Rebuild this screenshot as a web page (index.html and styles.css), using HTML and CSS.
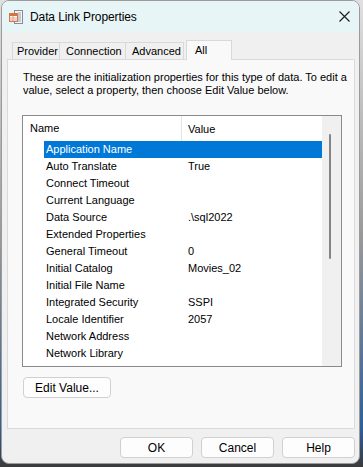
FILE: index.html
```html
<!DOCTYPE html>
<html>
<head>
<meta charset="utf-8">
<link rel="stylesheet" href="styles.css">
</head>
<body>
<div class="window">
  <div class="titlebar">
    <svg class="appicon" width="16" height="16" viewBox="0 0 16 16">
      <rect x="6.5" y="1.5" width="8" height="13" fill="#f4f4f4" stroke="#8a8a9a"/>
      <line x1="10" y1="4" x2="13" y2="4" stroke="#9aa0b8"/>
      <line x1="10" y1="6" x2="13" y2="6" stroke="#9aa0b8"/>
      <line x1="10" y1="8" x2="13" y2="8" stroke="#9aa0b8"/>
      <line x1="10" y1="10" x2="13" y2="10" stroke="#9aa0b8"/>
      <line x1="10" y1="12" x2="13" y2="12" stroke="#9aa0b8"/>
      <rect x="1.5" y="4.5" width="8" height="8" fill="#fff" stroke="#c87a50"/>
      <rect x="2" y="5" width="7" height="2" fill="#e0703a"/>
      <line x1="2" y1="9" x2="9" y2="9" stroke="#e8a080"/>
      <line x1="2" y1="11" x2="9" y2="11" stroke="#e8a080"/>
      <line x1="5" y1="7" x2="5" y2="12" stroke="#e8a080"/>
    </svg>
    <span class="title">Data Link Properties</span>
    <svg class="close" width="11" height="11" viewBox="0 0 11 11">
      <path d="M0.5 0.5 L10.5 10.5 M10.5 0.5 L0.5 10.5" stroke="#1a1a1a" stroke-width="1.1"/>
    </svg>
  </div>
  <div class="body">
    <div class="tabs">
      <div class="tab t1">Provider</div>
      <div class="tab t2">Connection</div>
      <div class="tab t3">Advanced</div>
      <div class="tab active">All</div>
    </div>
    <div class="panel">
      <p class="intro">These are the initialization properties for this type of data. To edit a value, select a property, then choose Edit Value below.</p>
      <div class="listbox">
        <div class="listmain">
          <div class="header">
            <div class="hname">Name</div>
            <div class="hvalue">Value</div>
          </div>
          <div class="rows">
            <div class="row sel"><span class="n">Application Name</span><span class="v"></span></div>
            <div class="row"><span class="n">Auto Translate</span><span class="v">True</span></div>
            <div class="row"><span class="n">Connect Timeout</span><span class="v"></span></div>
            <div class="row"><span class="n">Current Language</span><span class="v"></span></div>
            <div class="row"><span class="n">Data Source</span><span class="v">.\sql2022</span></div>
            <div class="row"><span class="n">Extended Properties</span><span class="v"></span></div>
            <div class="row"><span class="n">General Timeout</span><span class="v">0</span></div>
            <div class="row"><span class="n">Initial Catalog</span><span class="v">Movies_02</span></div>
            <div class="row"><span class="n">Initial File Name</span><span class="v"></span></div>
            <div class="row"><span class="n">Integrated Security</span><span class="v">SSPI</span></div>
            <div class="row"><span class="n">Locale Identifier</span><span class="v">2057</span></div>
            <div class="row"><span class="n">Network Address</span><span class="v"></span></div>
            <div class="row"><span class="n">Network Library</span><span class="v"></span></div>
          </div>
        </div>
        <div class="scrollbar"><div class="thumb"></div></div>
      </div>
      <button class="btn editbtn">Edit Value...</button>
    </div>
    <div class="footer">
      <button class="btn">OK</button>
      <button class="btn">Cancel</button>
      <button class="btn">Help</button>
    </div>
  </div>
</div>
</body>
</html>
```

FILE: styles.css
```css
*, *::before, *::after { box-sizing: border-box; }
html, body {
  margin: 0;
  padding: 0;
}
body {
  width: 363px;
  height: 467px;
  overflow: hidden;
  background: linear-gradient(to bottom, #e0e0e0 0%, #9a9a9a 50%, #2f5e96 92%, #3a3a3a 100%);
  font-family: "Liberation Sans", Arial, sans-serif;
  font-size: 11px;
  color: #000;
}
.window {
  margin-left: 1px;
  width: 359px;
  height: 464px;
  background: #f0f0f0;
  border: 1px solid #9b9b9b;
  border-radius: 8px;
  overflow: hidden;
  display: flex;
  flex-direction: column;
}
.titlebar {
  height: 31px;
  background: #e8f5f7;
  display: flex;
  align-items: center;
  padding-left: 6px;
  padding-right: 9px;
  flex: none;
}
.appicon { margin-right: 6px; flex: none; }
.title {
  font-size: 12px;
  flex: 1;
  letter-spacing: -0.1px;
}
.close { flex: none; }
.body {
  padding: 7px 4px 0 5px;
  display: flex;
  flex-direction: column;
}
.tabs {
  display: flex;
  align-items: flex-end;
  padding-left: 5px;
  height: 20px;
  position: relative;
  z-index: 1;
}
.tab {
  height: 17px;
  line-height: 16px;
  border: 1px solid #d9d9d9;
  border-bottom: none;
  border-right: none;
  padding: 0 0 0 4px;
  background: #f0f0f0;
  font-size: 11px;
  white-space: nowrap;
}
.t1 { width: 47px; }
.t2 { width: 66px; padding-left: 6px; }
.t3 { width: 59px; padding-left: 6px; border-right: 1px solid #d9d9d9; }
.tab.active {
  height: 20px;
  line-height: 18px;
  width: 46px;
  margin-left: 2px;
  border: 1px solid #d9d9d9;
  border-bottom: none;
  background: #f9f9f9;
  padding-left: 8px;
  margin-bottom: -1px;
}
.panel {
  height: 370px;
  background: #f9f9f9;
  border: 1px solid #dadada;
  padding: 0 11px 0 14px;
  display: flex;
  flex-direction: column;
}
.intro {
  margin: 11px 0 0 1px;
  line-height: 13px;
  font-size: 11px;
  width: 330px;
}
.listbox {
  margin-top: 18px;
  width: 320px;
  height: 252px;
  border: 1px solid #8a8a8a;
  background: #fff;
  display: flex;
}
.listmain {
  flex: 1;
  display: flex;
  flex-direction: column;
}
.header {
  height: 25px;
  display: flex;
  align-items: center;
}
.hname {
  width: 159px;
  padding-left: 7px;
  height: 25px;
  line-height: 25px;
  border-right: 1px solid #e5e5e5;
}
.hvalue {
  padding-left: 6px;
}
.rows { display: flex; flex-direction: column; }
.row {
  height: 17px;
  line-height: 17px;
  display: flex;
  margin-left: 21px;
}
.row .n {
  width: 144px;
  padding-left: 2px;
  flex: none;
}
.row .v { flex: 1; }
.row.sel {
  background: #0078d7;
  color: #fff;
}
.scrollbar {
  width: 19px;
  background: #f0f0f0;
  flex: none;
  position: relative;
}
.thumb {
  position: absolute;
  left: 7px;
  top: 18px;
  width: 2px;
  height: 125px;
  background: #858585;
  border-radius: 1px;
}
.btn {
  font-family: "Liberation Sans", Arial, sans-serif;
  font-size: 12px;
  background: #fdfdfd;
  border: 1px solid #d0d0d0;
  border-radius: 4px;
  height: 21px;
  padding: 0;
  color: #000;
}
.editbtn {
  margin-top: 10px;
  width: 88px;
  margin-left: 1px;
}
.footer {
  display: flex;
  justify-content: flex-end;
  gap: 8px;
  margin-top: 8px;
}
.footer .btn { width: 73px; }
```
